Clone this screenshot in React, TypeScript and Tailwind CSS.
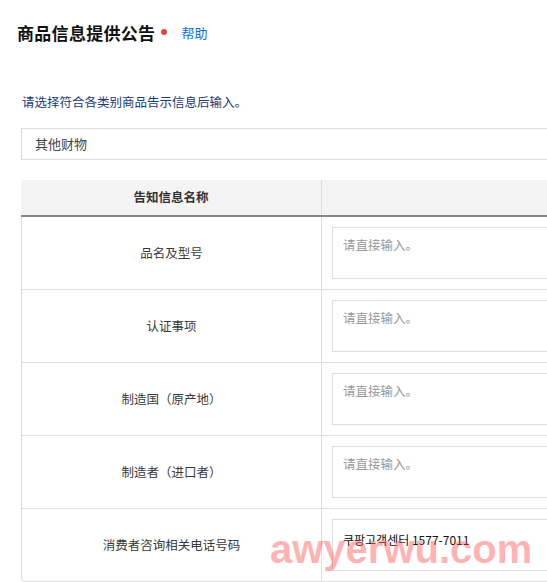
import React from 'react'

const rows = [
  { label: '品名及型号', value: '' },
  { label: '认证事项', value: '' },
  { label: '制造国（原产地）', value: '' },
  { label: '制造者（进口者）', value: '' },
  { label: '消费者咨询相关电话号码', value: '쿠팡고객센터 1577-7011' },
]

export default function App() {
  return (
    <div
      className="relative w-[547px] h-[582px] overflow-hidden bg-white"
      style={{ fontFamily: '"Noto Sans CJK SC", "Noto Sans CJK KR", "Liberation Sans", sans-serif' }}
    >
      {/* Title */}
      <div className="flex items-center pt-[22px] pl-[17px] h-[44px]">
        <h1 className="text-[17px] leading-[22px] font-bold tracking-[0.3px] text-[#111]">商品信息提供公告</h1>
        <span className="ml-[6px] w-[6px] h-[6px] rounded-full bg-[#e8413a] -mt-[3px]" />
        <a className="ml-[14px] text-[13px] leading-[22px] text-[#0a6fe0] -mt-[1px]">帮助</a>
      </div>

      {/* Instruction */}
      <p className="mt-[49px] pl-[22px] text-[12.5px] leading-[18px] text-[#1a3a78]">
        请选择符合各类别商品告示信息后输入。
      </p>

      {/* Category select */}
      <div className="mt-[17px] ml-[21px] w-[620px] h-[32px] border border-[#dddddd] flex items-center pl-[13px] text-[13px] text-[#444]">
        其他财物
      </div>

      {/* Notice table */}
      <div className="mt-[20px] ml-[21px] w-[640px]">
        <div className="flex h-[37px] bg-[#f4f4f4] rounded-tl-[4px] border-b-2 border-[#888888]">
          <div className="w-[300px] flex items-center justify-center text-[12.5px] font-bold text-[#333]">
            告知信息名称
          </div>
          <div className="flex-1 border-l border-[#dddddd]" />
        </div>
        {rows.map((row, i) => (
          <div
            key={row.label}
            className={`flex border-l border-b border-[#dddddd] ${i === rows.length - 1 ? 'rounded-bl-[4px]' : ''}`}
          >
            <div className="w-[299px] flex items-center justify-center text-[12.5px] text-[#3a3a3a]">
              {row.label}
            </div>
            <div className="flex-1 border-l border-[#dddddd] p-[10px]">
              <div className="h-[52px] border border-[#dddddd] px-[10px] pt-[8px] text-[12.5px] leading-[18px]">
                {row.value ? (
                  <span className="text-[12px] text-[#111] relative top-[3px]">{row.value}</span>
                ) : (
                  <span className="text-[#999]">请直接输入。</span>
                )}
              </div>
            </div>
          </div>
        ))}
      </div>

      {/* Watermark */}
      <div
        className="absolute left-[270px] top-[529px] text-[40px] leading-[40px] font-bold text-[rgba(255,70,70,0.42)] pointer-events-none"
        style={{ fontFamily: '"Liberation Sans", sans-serif' }}
      >
        awyerwu.com
      </div>
    </div>
  )
}
